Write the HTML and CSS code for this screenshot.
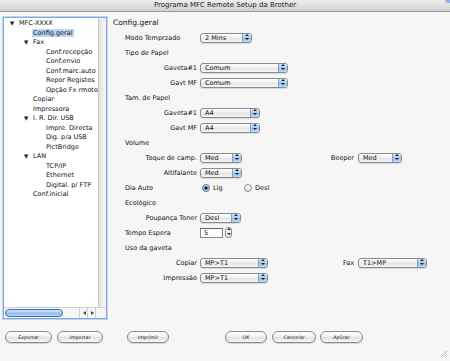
FILE: index.html
```html
<!DOCTYPE html>
<html lang="pt">
<head>
  <meta charset="UTF-8">
  <title>Programa MFC Remote Setup da Brother</title>
  <link rel="stylesheet" href="styles.css">
</head>
<body>
  <div class="window">
    <div class="titlebar">Programa MFC Remote Setup da Brother<span class="toggle"></span></div>
    <div class="content">
      <div class="tree">
        <div class="tree-body">
          <div class="nodes">
            <div class="node l0"><span class="tw">▼</span>MFC-XXXX</div>
            <div class="node l1leaf"><span class="current">Config.geral</span></div>
            <div class="node l1"><span class="tw">▼</span>Fax</div>
            <div class="node l2leaf">Conf.recepção</div>
            <div class="node l2leaf">Conf.envio</div>
            <div class="node l2leaf">Conf.marc.auto</div>
            <div class="node l2leaf">Repor Registos</div>
            <div class="node l2leaf">Opção Fx rmoto</div>
            <div class="node l1leaf">Copiar</div>
            <div class="node l1leaf">Impressora</div>
            <div class="node l1"><span class="tw">▼</span>I. R. Dir. USB</div>
            <div class="node l2leaf">Impre. Directa</div>
            <div class="node l2leaf">Dig. p/a USB</div>
            <div class="node l2leaf">PictBridge</div>
            <div class="node l1"><span class="tw">▼</span>LAN</div>
            <div class="node l2leaf">TCP/IP</div>
            <div class="node l2leaf">Ethernet</div>
            <div class="node l2leaf">Digital. p/ FTP</div>
            <div class="node l1leaf">Conf.inicial</div>
          </div>
          <div class="vscroll"></div>
        </div>
        <div class="hscroll">
          <div class="thumb"></div>
          <div class="track"></div>
          <div class="arrow left"></div>
          <div class="arrow right"></div>
          <div class="corner"></div>
        </div>
      </div>

      <div class="panel">
        <h1>Config.geral</h1>
        <div class="row">
          <span class="lab left">Modo Temprzado</span>
          <div class="sel w52"><span>2 Mins</span><i class="cap"></i></div>
        </div>
        <div class="row"><span class="sec">Tipo de Papel</span></div>
        <div class="row">
          <span class="lab">Gaveta#1</span>
          <div class="sel w88"><span>Comum</span><i class="cap"></i></div>
        </div>
        <div class="row">
          <span class="lab">Gavt MF</span>
          <div class="sel w88"><span>Comum</span><i class="cap"></i></div>
        </div>
        <div class="row"><span class="sec">Tam. de Papel</span></div>
        <div class="row">
          <span class="lab">Gaveta#1</span>
          <div class="sel w60"><span>A4</span><i class="cap"></i></div>
        </div>
        <div class="row">
          <span class="lab">Gavt MF</span>
          <div class="sel w60"><span>A4</span><i class="cap"></i></div>
        </div>
        <div class="row"><span class="sec">Volume</span></div>
        <div class="row">
          <span class="lab">Toque de camp.</span>
          <div class="col2"><div class="sel w42"><span>Med</span><i class="cap"></i></div></div>
          <span class="lab2">Beeper</span>
          <div class="sel w44"><span>Med</span><i class="cap"></i></div>
        </div>
        <div class="row">
          <span class="lab">Altifalante</span>
          <div class="sel w42"><span>Med</span><i class="cap"></i></div>
        </div>
        <div class="row">
          <span class="lab left">Dia Auto</span>
          <label class="opt"><i class="radio on"></i>Lig</label>
          <label class="opt"><i class="radio"></i>Desl</label>
        </div>
        <div class="row"><span class="sec">Ecológico</span></div>
        <div class="row">
          <span class="lab">Poupança Toner</span>
          <div class="sel w41"><span>Desl</span><i class="cap"></i></div>
        </div>
        <div class="row">
          <span class="lab left">Tempo Espera</span>
          <div class="field">5</div>
          <div class="stepper"></div>
        </div>
        <div class="row"><span class="sec">Uso da gaveta</span></div>
        <div class="row">
          <span class="lab">Copiar</span>
          <div class="col2"><div class="sel w68"><span>MP&gt;T1</span><i class="cap"></i></div></div>
          <span class="lab2">Fax</span>
          <div class="sel w69"><span>T1&gt;MP</span><i class="cap"></i></div>
        </div>
        <div class="row">
          <span class="lab">Impressão</span>
          <div class="sel w68"><span>MP&gt;T1</span><i class="cap"></i></div>
        </div>
      </div>
    </div>

    <div class="buttons">
      <button class="btn b47">Exportar</button>
      <button class="btn b46 g5">Importar</button>
      <button class="btn b42 g24">Imprimir</button>
      <button class="btn b42 g56">OK</button>
      <button class="btn b44 g5">Cancelar</button>
      <button class="btn b43 g4">Aplicar</button>
    </div>

    <svg class="grip" width="8" height="8" viewBox="0 0 8 8">
      <path d="M7 1 L1 7 M7 4 L4 7 M7 6.5 L6.5 7" stroke="#9a9a9a" stroke-width="0.8" fill="none"/>
    </svg>
  </div>
</body>
</html>
```

FILE: styles.css
```css
* { box-sizing: border-box; }
body { margin: 0; font-family: "DejaVu Sans", sans-serif; font-size: 6.5px; color: #111; background: #f6f6f6; }
.window { position: relative; width: 450px; height: 361px; overflow: hidden; }

.titlebar { position: relative; height: 12px; background: linear-gradient(#eeeeee, #d0d0d0); border-bottom: 1px solid #999; text-align: center; font-size: 7px; line-height: 11px; color: #222; }
.titlebar .toggle { position: absolute; right: -3px; top: -3px; width: 8px; height: 6px; border-radius: 4px; background: #8db5e6; }

.content { display: flex; height: 307px; padding: 5px 0 0 3px; }

/* arbre de gauche */
.tree { width: 104px; height: 302px; border: 1px solid #7fa7dc; box-shadow: 0 0 0 1px #bcd5f2; background: #fff; display: flex; flex-direction: column; }
.tree-body { flex: 1; display: flex; }
.nodes { flex: 1; padding-top: 1px; }
.node { height: 9.5px; line-height: 9.5px; white-space: nowrap; }
.tw { display: inline-block; width: 9px; font-size: 5.5px; color: #222; }
.l0 { padding-left: 6px; }
.l1 { padding-left: 20px; }
.l1leaf { padding-left: 29px; }
.l2leaf { padding-left: 42px; }
.current { background: #bcd6f4; padding: 0 1px; margin-left: -1px; }
.vscroll { width: 8px; background: linear-gradient(to right, #e2e2e2, #f7f7f7); border-left: 1px solid #c6c6c6; }
.hscroll { height: 11px; display: flex; align-items: center; border-top: 1px solid #cfcfcf; background: #f6f6f6; }
.thumb { width: 58px; height: 8px; margin-left: 1px; border-radius: 4px; border: 1px solid #3f6fae; background: linear-gradient(#d6e7fa, #9cc5f1 50%, #86b8ee 51%, #b9d8f7); }
.track { width: 16px; height: 8px; }
.arrow { position: relative; width: 8px; height: 10px; border-left: 1px solid #cfcfcf; }
.arrow::after { content: ""; position: absolute; top: 3px; border: 2px solid transparent; }
.arrow.left::after { left: 1px; border-right: 3px solid #444; }
.arrow.right::after { left: 3px; border-left: 3px solid #444; }
.corner { flex: 1; height: 10px; border-left: 1px solid #cfcfcf; }

/* panneau de droite */
.panel { margin-left: 6px; flex: 1; }
.panel h1 { margin: 0; height: 13px; font-size: 7.5px; font-weight: normal; line-height: 11px; }
.row { display: flex; align-items: center; height: 15px; white-space: nowrap; }
.sec { padding-left: 12px; }
.lab { width: 84px; margin-right: 3px; text-align: right; }
.lab.left { text-align: left; padding-left: 12px; }
.col2 { width: 100px; }
.lab2 { width: 54px; margin-right: 4px; text-align: right; }

.sel { display: flex; height: 10px; border: 1px solid #8a8a8a; border-radius: 3px; background: linear-gradient(#ffffff, #ededed 50%, #e4e4e4 51%, #f6f6f6); box-shadow: 0 1px 1px rgba(0, 0, 0, 0.12); overflow: hidden; }
.sel span { flex: 1; padding-left: 4px; line-height: 8px; }
.cap { position: relative; width: 9px; border-left: 1px solid #7d9fcb; background: linear-gradient(#dbeafb, #a3caf2 50%, #8dbcee 51%, #c0dcf8); }
.cap::before, .cap::after { content: ""; position: absolute; left: 2px; border: 2px solid transparent; }
.cap::before { top: -2px; border-bottom: 2px solid #222; }
.cap::after { top: 4px; border-top: 2px solid #222; }
.w41 { width: 41px; }
.w42 { width: 42px; }
.w44 { width: 44px; }
.w52 { width: 52px; }
.w60 { width: 60px; }
.w68 { width: 68px; }
.w69 { width: 69px; }
.w88 { width: 88px; }

.opt { display: flex; align-items: center; width: 40px; margin-left: 2px; }
.radio { width: 8px; height: 8px; margin-right: 3px; border-radius: 50%; border: 1px solid #8a8a8a; background: linear-gradient(#fff, #ddd); }
.radio.on { border-color: #4a78b4; background: radial-gradient(circle, #222 0 1.4px, transparent 1.8px), linear-gradient(#d0e4f9, #8dbcee 55%, #b5d6f6); }

.field { width: 23px; height: 10px; border: 1px solid #8a8a8a; border-top-color: #666; background: #fff; padding-left: 3px; line-height: 8px; }
.stepper { position: relative; width: 7px; height: 11px; margin-left: 2px; border: 1px solid #8a8a8a; border-radius: 3px; background: linear-gradient(#fff, #e4e4e4); }
.stepper::before, .stepper::after { content: ""; position: absolute; left: 0.5px; border: 2px solid transparent; }
.stepper::before { top: -2px; border-bottom: 2px solid #222; }
.stepper::after { top: 5px; border-top: 2px solid #222; }

/* boutons du bas */
.buttons { display: flex; margin-top: 12px; padding-left: 5px; }
.btn { height: 12px; padding: 0; border: 1px solid #8a8a8a; border-radius: 6px; background: linear-gradient(#ffffff, #efefef 50%, #e0e0e0 51%, #f7f7f7); font-family: "DejaVu Sans", sans-serif; font-size: 4.8px; color: #222; box-shadow: 0 1px 1px rgba(0, 0, 0, 0.15); }
.b42 { width: 42px; }
.b43 { width: 43px; }
.b44 { width: 44px; }
.b46 { width: 46px; }
.b47 { width: 47px; }
.g4 { margin-left: 4px; }
.g5 { margin-left: 5px; }
.g24 { margin-left: 24px; }
.g56 { margin-left: 56px; }

.grip { position: absolute; right: 2px; bottom: 3px; }
```
